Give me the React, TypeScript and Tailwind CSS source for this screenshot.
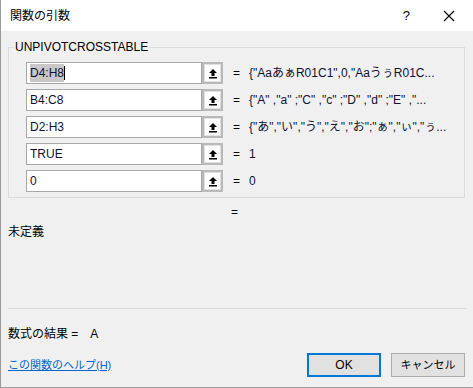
import React from "react";

const font = { fontFamily: '"Liberation Sans", "Noto Sans CJK JP", sans-serif' };

const rows = [
  { arg: "D4:H8", value: '{"AaあぁR01C1",0,"AaうぅR01C...', selected: true },
  { arg: "B4:C8", value: '{"A" ,"a" ;"C" ,"c" ;"D" ,"d" ;"E" ,"...' },
  { arg: "D2:H3", value: '{"あ","い","う","え","お";"ぁ","ぃ","ぅ...' },
  { arg: "TRUE", value: "1" },
  { arg: "0", value: "0" },
];

function RefButton() {
  return (
    <div className="flex h-[22px] w-[21px] items-center justify-center border-2 border-[#b9b9b9] bg-[#e1e1e1]">
      <div className="flex h-[16px] w-[15px] items-center justify-center bg-white">
        <svg width="10" height="11" viewBox="0 0 10 11">
          <path d="M5 1 L9 5 H6.5 V8 H3.5 V5 H1 Z" fill="#000" />
          <rect x="1" y="9" width="8" height="1.5" fill="#000" />
        </svg>
      </div>
    </div>
  );
}

export default function App() {
  return (
    <div className="h-[388px] w-[473px] overflow-hidden border-b border-l border-[#9a9a9a] bg-[#f0f0f0] text-[12px] text-black" style={font}>
      <div className="flex h-[31px] items-center bg-white pl-[9px]">
        <span className="text-[12px]">関数の引数</span>
        <span className="ml-auto mr-[33px] text-[13px]">?</span>
        <svg width="12" height="12" viewBox="0 0 12 12" className="mr-[18px]">
          <path d="M1 1 L11 11 M11 1 L1 11" stroke="#000" strokeWidth="1.1" />
        </svg>
      </div>

      <div className="relative ml-[7px] mr-[8px] mt-[16px] h-[151px] border border-[#dcdcdc]">
        <span className="absolute -top-[9px] left-[5px] bg-[#f0f0f0] px-[1px] leading-[16px]">UNPIVOTCROSSTABLE</span>
        <div className="flex flex-col gap-[5px] pt-[14px] pl-[17px]">
          {rows.map((r) => (
            <div key={r.arg} className="flex h-[22px] items-center">
              <div className="flex h-[22px] w-[176px] items-center border border-[#a8a8a8] bg-white pl-[3px]">
                {r.selected ? (
                  <>
                    <span className="bg-[#c8c8c8] text-[#101030]">{r.arg}</span>
                    <span className="h-[14px] w-px bg-black" />
                  </>
                ) : (
                  <span className="text-[#101030]">{r.arg}</span>
                )}
              </div>
              <RefButton />
              <span className="ml-[10px] w-[16px]">=</span>
              <span className="whitespace-nowrap text-[#101030]">{r.value}</span>
            </div>
          ))}
        </div>
      </div>

      <div className="ml-[230px] mt-[6px] leading-[16px]">=</div>
      <div className="ml-[7px] mt-[4px] leading-[16px]">未定義</div>

      <div className="ml-[7px] mr-[7px] mt-[68px] border-t border-[#dadada]" />

      <div className="ml-[7px] mt-[17px] flex leading-[16px]">
        <span>数式の結果 =</span>
        <span className="ml-[12px]">A</span>
      </div>

      <div className="mt-[11px] flex items-center pl-[7px]">
        <span className="text-[11px] text-[#0066cc] underline">この関数のヘルプ(H)</span>
        <button className="ml-auto h-[24px] w-[74px] border-2 border-[#0078d7] bg-[#e1e1e1] text-[12px]">OK</button>
        <button className="ml-[10px] mr-[8px] h-[24px] w-[74px] border border-[#adadad] bg-[#e1e1e1] text-[11px]">キャンセル</button>
      </div>
    </div>
  );
}
